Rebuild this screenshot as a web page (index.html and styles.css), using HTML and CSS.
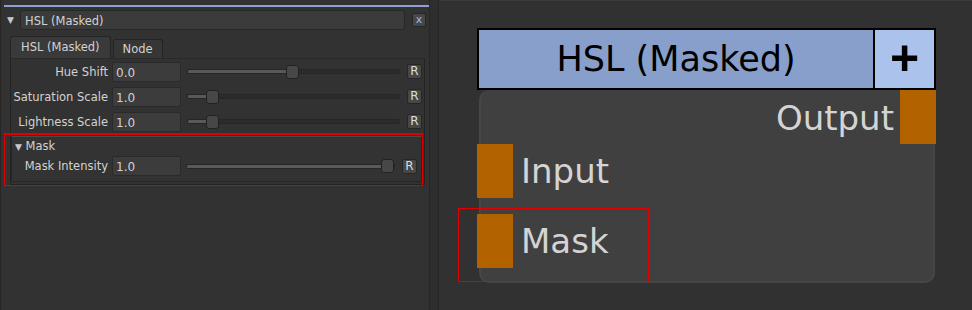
FILE: index.html
```html
<!DOCTYPE html>
<html lang="en">
<head>
  <meta charset="UTF-8" />
  <title>HSL (Masked)</title>
  <link rel="stylesheet" href="styles.css">
</head>
<body>

  <div class="props">
    <div class="topline"></div>

    <div class="titlebar">
      <span class="arrow">&#9660;</span>
      <div class="namefield">HSL (Masked)</div>
      <button class="close">x</button>
    </div>

    <div class="tabs">
      <div class="tab active">HSL (Masked)</div>
      <div class="tab">Node</div>
    </div>

    <div class="tabpanel">
      <div class="row">
        <label>Hue Shift</label>
        <div class="field">0.0</div>
        <div class="slider"><div class="fill" style="width:98px"></div><div class="thumb"></div><div class="rest"></div></div>
        <button class="reset">R</button>
      </div>
      <div class="row">
        <label>Saturation Scale</label>
        <div class="field">1.0</div>
        <div class="slider"><div class="fill" style="width:18px"></div><div class="thumb"></div><div class="rest"></div></div>
        <button class="reset">R</button>
      </div>
      <div class="row">
        <label>Lightness Scale</label>
        <div class="field">1.0</div>
        <div class="slider"><div class="fill" style="width:18px"></div><div class="thumb"></div><div class="rest"></div></div>
        <button class="reset">R</button>
      </div>

      <div class="group">
        <div class="group-head"><span class="arrow">&#9660;</span> Mask</div>
        <div class="row inner">
          <label>Mask Intensity</label>
          <div class="field">1.0</div>
          <div class="slider"><div class="fill" style="width:197px"></div><div class="thumb"></div><div class="rest"></div></div>
          <button class="reset">R</button>
        </div>
      </div>
    </div>

    <div class="highlight hl-group"></div>
  </div>

  <div class="splitter"></div>

  <div class="canvas">
    <div class="node">
      <div class="node-head">
        <div class="node-title">HSL (Masked)</div>
        <div class="node-add">+</div>
      </div>
      <div class="node-body">
        <div class="port-out">
          <span>Output</span>
          <div class="port"></div>
        </div>
        <div class="port-in">
          <div class="port"></div>
          <span>Input</span>
        </div>
        <div class="port-in mask">
          <div class="port"></div>
          <span>Mask</span>
        </div>
      </div>
    </div>
    <div class="highlight hl-port"></div>
  </div>

</body>
</html>
```

FILE: styles.css
```css
:root {
  --bg: #323232;
  --field: #3c3c3c;
  --line: #232323;
  --text: #d2d2d2;
  --port: #b36200;
  --node-head: #889fcb;
  --node-add: #abc3ec;
}

body {
  margin: 0;
  display: flex;
  height: 310px;
  background: var(--bg);
  font-family: 'DejaVu Sans', 'Liberation Sans', sans-serif;
  font-size: 11.5px;
  color: var(--text);
  overflow: hidden;
}

button {
  font-family: inherit;
  padding: 0;
}

/* ---------- properties panel ---------- */

.props {
  position: relative;
  width: 425px;
  padding-left: 3px;
  border-left: 1px solid #262626;
  border-right: 1px solid #262626;
}

.topline {
  height: 2px;
  margin-top: 5px;
  background: #8ba2d2;
}

.titlebar {
  display: flex;
  align-items: center;
  height: 20px;
  margin-top: 3px;
}

.arrow {
  font-size: 9px;
  color: #c8c8c8;
}

.titlebar .arrow {
  width: 16px;
  padding-left: 3px;
  box-sizing: border-box;
}

.namefield {
  flex: 1;
  height: 20px;
  line-height: 20px;
  padding-left: 4px;
  background: #3b3b3b;
  border: 1px solid #282828;
  border-radius: 3px;
  box-sizing: border-box;
}

.close {
  width: 14px;
  height: 14px;
  margin: 0 3px 0 7px;
  background: #474747;
  border: 1px solid #262626;
  border-radius: 2px;
  color: #9fb7e0;
  font-size: 11px;
  line-height: 10px;
}

.tabs {
  display: flex;
  align-items: flex-end;
  gap: 2px;
  height: 22px;
  margin: 6px 0 0 6px;
}

.tab {
  height: 18px;
  line-height: 18px;
  padding: 0 9px;
  background: #363636;
  border: 1px solid #242424;
  border-bottom: none;
  border-radius: 3px 3px 0 0;
}

.tab.active {
  height: 21px;
  line-height: 21px;
  padding: 0 10px;
  background: #3a3a3a;
}

.tabpanel {
  margin: 0 4px 0 6px;
  height: 127px;
  border: 1px solid #232323;
  border-top-color: #2a2a2a;
  box-sizing: border-box;
}

.row {
  display: flex;
  align-items: center;
  height: 25px;
}

.row label {
  display: flex;
  justify-content: flex-end;
  width: 97px;
  padding-right: 4px;
  white-space: nowrap;
  flex: none;
}

.field {
  width: 69px;
  height: 20px;
  line-height: 20px;
  padding-left: 3px;
  background: var(--field);
  border: 1px solid #2a2a2a;
  border-radius: 2px;
  box-sizing: border-box;
  font-size: 12px;
}

.slider {
  display: flex;
  align-items: center;
  width: 213px;
  margin-left: 6px;
}

.slider .fill {
  height: 3px;
  background: #595959;
  border: 1px solid #262626;
  border-right: none;
  border-radius: 2px 0 0 2px;
}

.slider .rest {
  flex: 1;
  height: 3px;
  background: #2b2b2b;
  border: 1px solid #262626;
  border-left: none;
  border-radius: 0 2px 2px 0;
}

.thumb {
  width: 11px;
  height: 12px;
  background: #474747;
  border: 1px solid #222;
  border-radius: 3px;
  flex: none;
}

.reset {
  width: 15px;
  height: 15px;
  margin-left: 7px;
  background: #474747;
  border: 1px solid #262626;
  border-radius: 2px;
  color: #dcdcdc;
  font-size: 12px;
  line-height: 13px;
}

.group {
  margin: 2px 2px 0 0;
  height: 46px;
  border: 1px solid #262626;
  border-top-color: #4a4a4a;
  box-sizing: border-box;
  background: #333;
}

.group-head {
  height: 18px;
  line-height: 18px;
  padding-left: 3px;
}

.row.inner {
  height: 22px;
}

.row.inner label {
  width: 96px;
}

.row.inner .slider {
  width: 209px;
  margin-left: 5px;
}

/* red highlight overlays */
.highlight {
  position: absolute;
  border: 1px solid #e00000;
  pointer-events: none;
}

.hl-group {
  left: 3px;
  top: 133px;
  width: 417px;
  height: 50px;
  border-width: 2px 1px 1px 1px;
}

/* ---------- splitter ---------- */

.splitter {
  width: 8px;
  background: #2e2e2e;
  border-right: 1px solid #262626;
}

/* ---------- node canvas ---------- */

.canvas {
  position: relative;
  flex: 1;
  background: #313131;
  border-top: 1px solid #3a3a3a;
}

.node {
  position: absolute;
  left: 38px;
  top: 27px;
  width: 459px;
}

.node-head {
  display: flex;
  height: 62px;
  border: 2px solid #000;
  box-sizing: border-box;
}

.node-title {
  flex: 1;
  background: var(--node-head);
  color: #000;
  font-size: 35px;
  line-height: 58px;
  text-align: center;
}

.node-add {
  width: 59px;
  background: var(--node-add);
  border-left: 2px solid #000;
  color: #000;
  font-family: 'Liberation Sans', sans-serif;
  font-size: 50px;
  font-weight: bold;
  line-height: 56px;
  text-align: center;
}

.node-body {
  display: flex;
  flex-direction: column;
  margin: 0 1px 0 2px;
  height: 193px;
  background: #404040;
  border: 2px solid #464646;
  border-top: none;
  border-radius: 10px;
  border-top-right-radius: 0;
  box-sizing: border-box;
  color: #d4d4d4;
  font-size: 34px;
}

.port {
  width: 36px;
  height: 54px;
  background: var(--port);
  flex: none;
}

.port-out {
  display: flex;
  justify-content: flex-end;
  align-items: center;
  gap: 6px;
  margin-right: -3px;
}

.port-out span {
  margin-top: 2px;
}

.port-in {
  display: flex;
  align-items: center;
  gap: 8px;
  margin-left: -4px;
}

.port-in.mask {
  margin-top: 16px;
}

.hl-port {
  left: 19px;
  top: 207px;
  width: 189px;
  height: 72px;
}
```
